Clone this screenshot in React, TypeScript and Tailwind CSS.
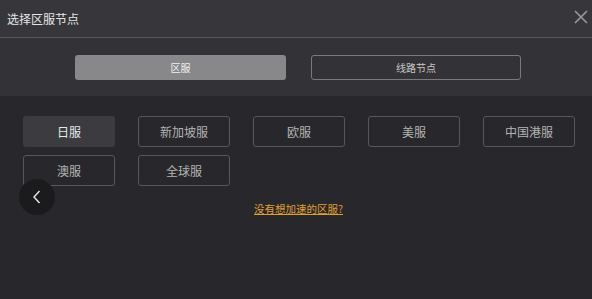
import React from "react";

const font = { fontFamily: '"Noto Sans CJK SC", "Noto Sans", sans-serif' };

export default function App() {
  const row1 = ["日服", "新加坡服", "欧服", "美服", "中国港服"];
  const row2 = ["澳服", "全球服"];
  return (
    <div className="w-[592px] h-[299px] bg-[#28282c] flex flex-col overflow-hidden relative" style={font}>
      <div className="h-[37px] bg-[#37373b] flex items-center justify-between pl-[7px] pr-[3px] shrink-0">
        <span className="text-[12px] text-[#e6e6e6] leading-none">选择区服节点</span>
        <svg width="16" height="16" viewBox="0 0 16 16" className="mb-[3px]">
          <path d="M2 2 L14 14 M14 2 L2 14" stroke="#9a9a9e" strokeWidth="1.6" />
        </svg>
      </div>
      <div className="h-[1px] bg-[#56565a] shrink-0" />
      <div className="h-[58px] bg-[#333337] flex items-center pl-[75px] gap-[25px] shrink-0">
        <div className="w-[211px] h-[25px] rounded-[3px] bg-[#88888b] flex items-center justify-center text-[10px] text-[#f0f0f0]">区服</div>
        <div className="w-[210px] h-[25px] rounded-[3px] border border-[#7a7a7e] flex items-center justify-center text-[10px] text-[#c8c8c8]">线路节点</div>
      </div>
      <div className="flex-1 flex flex-col pt-[20px] pl-[23px]">
        <div className="flex gap-[23px]">
          {row1.map((t, i) => (
            <div
              key={t}
              className={
                i === 0
                  ? "w-[92px] h-[31px] rounded-[3px] bg-[#3c3c40] flex items-center justify-center text-[12px] text-[#e8e8e8]"
                  : "w-[92px] h-[31px] rounded-[3px] border border-[#58585c] flex items-center justify-center text-[12px] text-[#b4b4b4]"
              }
            >
              {t}
            </div>
          ))}
        </div>
        <div className="flex gap-[23px] mt-[8px]">
          {row2.map((t) => (
            <div key={t} className="w-[92px] h-[31px] rounded-[3px] border border-[#58585c] flex items-center justify-center text-[12px] text-[#b4b4b4]">
              {t}
            </div>
          ))}
        </div>
        <div className="flex justify-center mt-[18px] ml-[-23px] pl-[5px]">
          <span className="text-[10.5px] text-[#e0a030] underline leading-none">没有想加速的区服?</span>
        </div>
      </div>
      <div className="absolute left-[19px] top-[179px] w-[36px] h-[36px] rounded-full bg-[#1b1b1e] flex items-center justify-center">
        <svg width="12" height="16" viewBox="0 0 12 16">
          <path d="M8.5 2 L3 8 L8.5 14" stroke="#e8e8e8" strokeWidth="1.4" fill="none" />
        </svg>
      </div>
    </div>
  );
}
